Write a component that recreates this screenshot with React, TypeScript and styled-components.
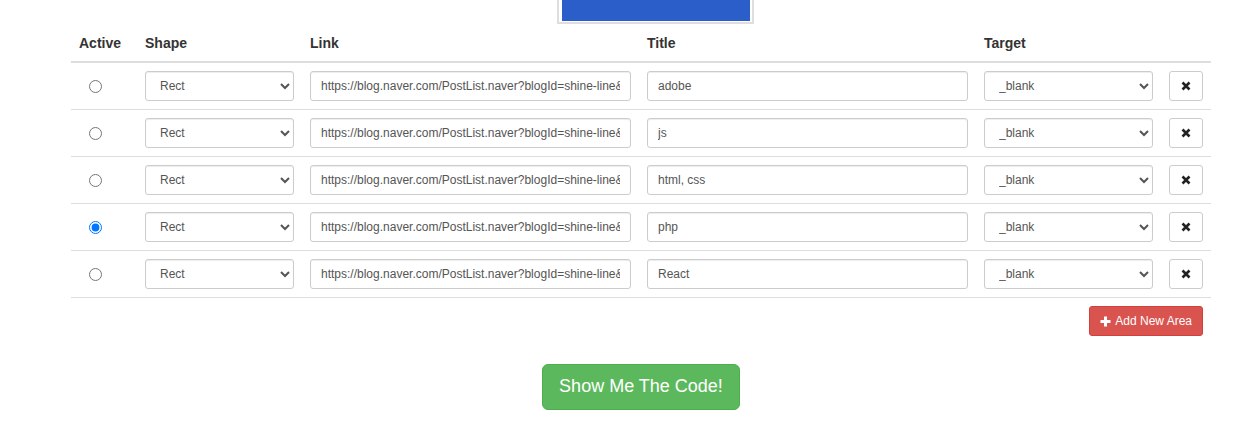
import React from "react";
import styled, { createGlobalStyle } from "styled-components";

const Global = createGlobalStyle`
  html, body { margin: 0; padding: 0; background: #fff; }
  body {
    font-family: "Liberation Sans", Arial, Helvetica, sans-serif;
    font-size: 14px;
    line-height: 1.42857;
    color: #333;
  }
  * { box-sizing: border-box; }
`;

const Page = styled.div`
  width: 1140px;
  margin-left: 71px;
  display: flex;
  flex-direction: column;
`;

const Thumb = styled.div`
  align-self: flex-start;
  margin-left: 486px;
  width: 197px;
  height: 24px;
  border: 2px solid #dedede;
  border-top: 0;
  padding: 0 2px 1px 3px;
  background: #fff;
`;

const ThumbImage = styled.div`
  width: 100%;
  height: 100%;
  background: #2b5ec8;
`;

const Table = styled.table`
  width: 1140px;
  table-layout: fixed;
  border-collapse: collapse;
  border-spacing: 0;
  margin-top: 1px;
  margin-bottom: 20px;
`;

const Th = styled.th<{ $w: number }>`
  width: ${(p) => p.$w}px;
  text-align: left;
  font-weight: bold;
  padding: 8px;
  line-height: 20px;
  vertical-align: bottom;
  border-bottom: 2px solid #ddd;
  color: #333;
`;

const Td = styled.td`
  padding: 8px;
  height: 47px;
  vertical-align: middle;
  border-top: 1px solid #ddd;
`;

const FootTd = styled.td`
  padding: 8px;
  text-align: right;
  border-top: 1px solid #ddd;
`;

const Radio = styled.input`
  margin: 0 0 0 10px;
  width: 13px;
  height: 13px;
  display: block;
`;

const fieldBase = `
  display: block;
  width: 100%;
  height: 30px;
  padding: 5px 10px;
  font-size: 12px;
  line-height: 1.5;
  border-radius: 3px;
  color: #555;
  background: #fff;
  border: 1px solid #ccc;
  box-shadow: inset 0 1px 1px rgba(0, 0, 0, 0.075);
  font-family: "Liberation Sans", Arial, Helvetica, sans-serif;
  outline: none;
`;

const Select = styled.select`
  ${fieldBase}
`;

const TextInput = styled.input`
  ${fieldBase}
`;

const DeleteButton = styled.button`
  display: flex;
  align-items: center;
  justify-content: center;
  width: 34px;
  height: 30px;
  padding: 0;
  border: 1px solid #ccc;
  border-radius: 3px;
  background: #fff;
  color: #333;
`;

const AddButton = styled.button`
  display: inline-flex;
  align-items: center;
  gap: 4px;
  height: 30px;
  padding: 0 10px;
  font-size: 12px;
  line-height: 1.5;
  font-family: "Liberation Sans", Arial, Helvetica, sans-serif;
  color: #fff;
  background: #d9534f;
  border: 1px solid #d43f3a;
  border-radius: 3px;
`;

const CodeRow = styled.div`
  display: flex;
  justify-content: center;
`;

const CodeButton = styled.button`
  height: 46px;
  padding: 10px 16px;
  white-space: nowrap;
  font-size: 18px;
  line-height: 1.3333;
  font-family: "Liberation Sans", Arial, Helvetica, sans-serif;
  color: #fff;
  background: #5cb85c;
  border: 1px solid #4cae4c;
  border-radius: 6px;
`;

const RemoveIcon = () => (
  <svg width="10" height="10" viewBox="0 0 10 10">
    <path d="M1.5 1.5 L8.5 8.5 M8.5 1.5 L1.5 8.5" stroke="#222" strokeWidth="2.6" strokeLinecap="butt" />
  </svg>
);

const PlusIcon = () => (
  <svg width="11" height="11" viewBox="0 0 11 11">
    <path d="M5.5 0.5 V10.5 M0.5 5.5 H10.5" stroke="#fff" strokeWidth="3" />
  </svg>
);

const LINK = "https://blog.naver.com/PostList.naver?blogId=shine-line&categoryNo=1&from=postList";

const rows = [
  { title: "adobe", active: false },
  { title: "js", active: false },
  { title: "html, css", active: false },
  { title: "php", active: true },
  { title: "React", active: false },
];

export default function App() {
  return (
    <>
      <Global />
      <Page>
        <Thumb>
          <ThumbImage />
        </Thumb>
        <Table>
          <thead>
            <tr>
              <Th $w={66}>Active</Th>
              <Th $w={165}>Shape</Th>
              <Th $w={337}>Link</Th>
              <Th $w={337}>Title</Th>
              <Th $w={185}>Target</Th>
              <Th $w={50}></Th>
            </tr>
          </thead>
          <tbody>
            {rows.map((r, i) => (
              <tr key={i}>
                <Td>
                  <Radio type="radio" name="active" defaultChecked={r.active} />
                </Td>
                <Td>
                  <Select defaultValue="rect">
                    <option value="rect">Rect</option>
                    <option value="circle">Circle</option>
                    <option value="poly">Poly</option>
                  </Select>
                </Td>
                <Td>
                  <TextInput type="text" defaultValue={LINK} />
                </Td>
                <Td>
                  <TextInput type="text" defaultValue={r.title} />
                </Td>
                <Td>
                  <Select defaultValue="_blank">
                    <option value="_blank">_blank</option>
                    <option value="_self">_self</option>
                    <option value="_parent">_parent</option>
                    <option value="_top">_top</option>
                  </Select>
                </Td>
                <Td>
                  <DeleteButton type="button" aria-label="Remove">
                    <RemoveIcon />
                  </DeleteButton>
                </Td>
              </tr>
            ))}
          </tbody>
          <tfoot>
            <tr>
              <FootTd colSpan={6}>
                <AddButton type="button">
                  <PlusIcon />
                  Add New Area
                </AddButton>
              </FootTd>
            </tr>
          </tfoot>
        </Table>
        <CodeRow>
          <CodeButton type="button">Show Me The Code!</CodeButton>
        </CodeRow>
      </Page>
    </>
  );
}
